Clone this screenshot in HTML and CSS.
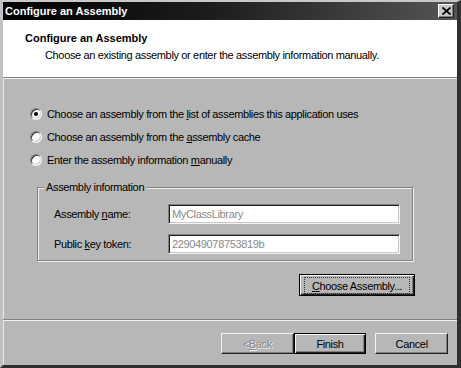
FILE: index.html
```html
<!DOCTYPE html>
<html>
<head>
<meta charset="utf-8">
<link rel="stylesheet" href="styles.css">
</head>
<body>
<div class="window">
  <div class="titlebar">
    <span class="title">Configure an Assembly</span>
    <span class="close"><svg width="9" height="8" viewBox="0 0 9 8"><path d="M0.5 0.5 L8.5 7.5 M8.5 0.5 L0.5 7.5" stroke="#000" stroke-width="1.8"/></svg></span>
  </div>
  <div class="header">
    <div class="h-title">Configure an Assembly</div>
    <div class="h-sub">Choose an existing assembly or enter the assembly information manually.</div>
  </div>
  <div class="sep"></div>
  <div class="content">
    <div class="radios">
      <div class="radio-row"><span class="radio checked"></span><span>Choose an assembly from the <u>l</u>ist of assemblies this application uses</span></div>
      <div class="radio-row"><span class="radio"></span><span>Choose an assembly from the <u>a</u>ssembly cache</span></div>
      <div class="radio-row"><span class="radio"></span><span>Enter the assembly information <u>m</u>anually</span></div>
    </div>
    <div class="group">
      <span class="legend">Assembly information</span>
      <div class="field"><span class="label">Assembly <u>n</u>ame:</span><div class="input">MyClassLibrary</div></div>
      <div class="field"><span class="label">Public <u>k</u>ey token:</span><div class="input">229049078753819b</div></div>
    </div>
    <div class="choose-row">
      <div class="btn focused"><span class="focus"><u>C</u>hoose Assembly...</span></div>
    </div>
    <div class="spacer"></div>
    <div class="sep"></div>
    <div class="buttons">
      <div class="btn disabled">&lt; <u>B</u>ack</div>
      <div class="btn default">Finish</div>
      <div class="btn cancel">Cancel</div>
    </div>
  </div>
</div>
</body>
</html>
```
FILE: styles.css
```css
html, body {
  margin: 0;
  padding: 0;
  background: #b9b9b9;
}
.window {
  width: 461px;
  height: 368px;
  box-sizing: border-box;
  background: #b7b7b7;
  border-top: 2px solid #c8c8c8;
  border-left: 3px solid #c0c0c0;
  border-right: 4px solid #303030;
  border-bottom: 3px solid #303030;
  box-shadow: inset 1px 0 0 #e8e8e8;
  display: flex;
  flex-direction: column;
  font-family: "Liberation Sans", Arial, sans-serif;
  font-size: 11px;
  letter-spacing: -0.35px;
  color: #000;
}
.titlebar {
  height: 18px;
  background: linear-gradient(to right, #000 0%, #1c1c1c 45%, #555 100%);
  display: flex;
  align-items: center;
  justify-content: space-between;
  padding: 0 3px 0 2px;
}
.title {
  color: #fff;
  font-weight: bold;
  font-size: 11px;
  letter-spacing: 0;
}
.close {
  width: 16px;
  height: 14px;
  box-sizing: border-box;
  background: #c8c8c8;
  border: 1px solid;
  border-color: #fff #202020 #202020 #fff;
  box-shadow: inset -1px -1px 0 #808080;
  display: flex;
  align-items: center;
  justify-content: center;
}
.header {
  height: 57px;
  background: #fff;
  box-sizing: border-box;
  padding: 11px 0 0 22px;
}
.h-title {
  font-weight: bold;
  line-height: 14px;
  letter-spacing: 0;
}
.h-sub {
  padding-left: 20px;
  margin-top: 3px;
  line-height: 14px;
}
.sep {
  height: 1px;
  background: #808080;
  border-bottom: 1px solid #f0f0f0;
  flex-shrink: 0;
}
.content {
  flex: 1;
  display: flex;
  flex-direction: column;
}
.radios {
  padding: 23px 0 0 27px;
}
.radio-row {
  height: 23px;
  display: flex;
  align-items: center;
  gap: 5px;
}
.radio {
  width: 12px;
  height: 12px;
  box-sizing: border-box;
  border-radius: 50%;
  border: 1px solid;
  border-color: #808080 #f4f4f4 #f4f4f4 #808080;
  box-shadow: inset 1px 1px 0 #303030, inset -1px -1px 0 #c8c8c8;
  background: #fff;
  display: flex;
  align-items: center;
  justify-content: center;
}
.radio.checked::after {
  content: "";
  width: 4px;
  height: 4px;
  border-radius: 50%;
  background: #000;
}
.group {
  position: relative;
  margin: 16px 0 0 34px;
  width: 376px;
  height: 74px;
  box-sizing: border-box;
  border: 1px solid #808080;
  box-shadow: 1px 1px 0 #f0f0f0, inset 1px 1px 0 #f0f0f0;
  padding: 16px 12px 0 16px;
}
.legend {
  position: absolute;
  top: -7px;
  left: 6px;
  background: #b7b7b7;
  padding: 0 3px 0 2px;
  line-height: 13px;
}
.field {
  display: flex;
  align-items: center;
  height: 20px;
  margin-bottom: 10px;
}
.label {
  width: 114px;
}
.input {
  width: 232px;
  height: 20px;
  box-sizing: border-box;
  background: #fff;
  border: 1px solid;
  border-color: #808080 #f4f4f4 #f4f4f4 #808080;
  box-shadow: inset 1px 1px 0 #202020, inset -1px -1px 0 #c8c8c8;
  color: #8a8a8a;
  padding: 0 3px;
  display: flex;
  align-items: center;
}
.choose-row {
  display: flex;
  justify-content: flex-end;
  padding-right: 42px;
  margin-top: 13px;
}
.btn {
  box-sizing: border-box;
  height: 21px;
  width: 73px;
  background: #b7b7b7;
  border: 1px solid;
  border-color: #f4f4f4 #202020 #202020 #f4f4f4;
  box-shadow: inset -1px -1px 0 #808080;
  display: flex;
  align-items: center;
  justify-content: center;
}
.btn.focused, .btn.default {
  border-color: #000;
  box-shadow: inset 1px 1px 0 #f4f4f4, inset -1px -1px 0 #202020, inset -2px -2px 0 #808080;
}
.btn.focused {
  width: 116px;
  height: 22px;
}
.focus {
  border: 1px dotted #333;
  padding: 2px 7px 1px;
  line-height: 12px;
}
.btn.disabled {
  color: #8a8a8a;
  text-shadow: 1px 1px 0 #f0f0f0;
}
.spacer {
  flex: 1;
}
.buttons {
  display: flex;
  padding: 12px 9px 11px 218px;
}
.buttons .cancel {
  margin-left: 9px;
}
```
